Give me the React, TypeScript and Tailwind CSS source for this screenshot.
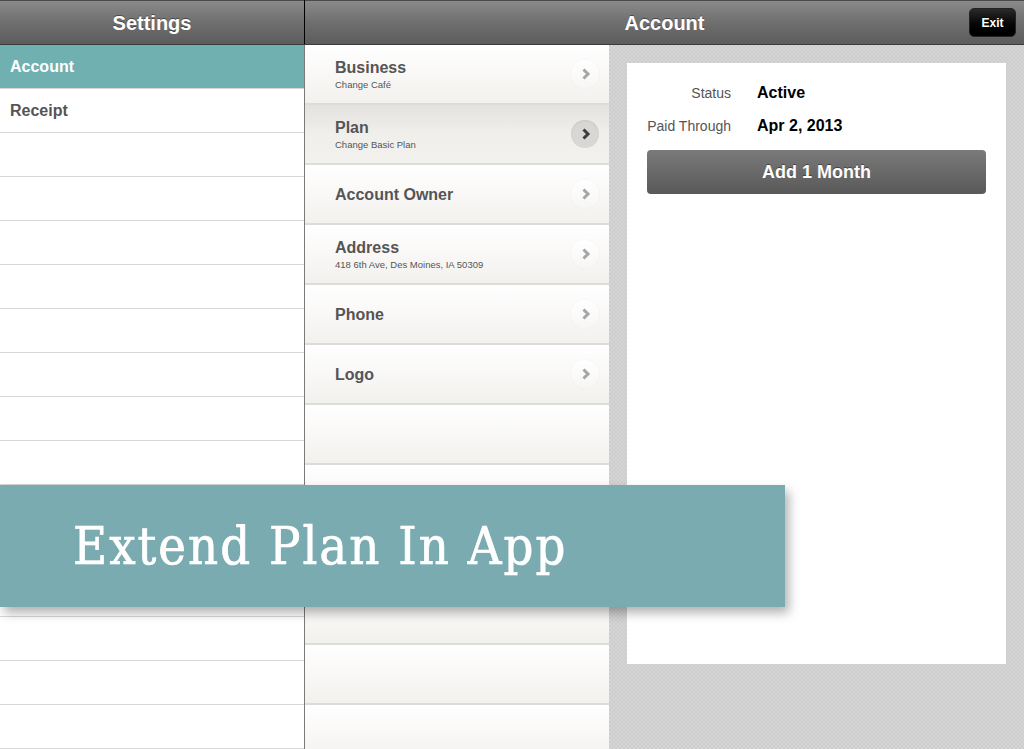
import React from "react";

const Chevron = ({ dark }: { dark?: boolean }) => (
  <div
    className={`flex h-[28px] w-[28px] items-center justify-center rounded-full ${
      dark
        ? "bg-[#d9d7d5] shadow-[inset_0_1px_2px_rgba(0,0,0,0.08)]"
        : "bg-gradient-to-b from-white to-[#f7f6f5] shadow-[0_0_2px_rgba(0,0,0,0.06)]"
    }`}
  >
    <svg width="12" height="14" viewBox="0 0 12 14" className="ml-[2px]">
      <path
        d="M3.5 2.5 L8 7 L3.5 11.5"
        fill="none"
        stroke={dark ? "#3d3d3d" : "#a6a6a6"}
        strokeWidth="3"
        strokeLinecap="butt"
        strokeLinejoin="miter"
      />
    </svg>
  </div>
);

const midRows: { title: string; sub?: string; active?: boolean }[] = [
  { title: "Business", sub: "Change Café" },
  { title: "Plan", sub: "Change Basic Plan", active: true },
  { title: "Account Owner" },
  { title: "Address", sub: "418 6th Ave, Des Moines, IA 50309" },
  { title: "Phone" },
  { title: "Logo" },
];

export default function App() {
  const leftRows = Array.from({ length: 17 });
  const emptyMid = Array.from({ length: 6 });
  return (
    <div
      className="relative h-[749px] w-[1024px] overflow-hidden bg-white"
      style={{ fontFamily: '"Liberation Sans", Arial, sans-serif' }}
    >
      {/* Header */}
      <div className="flex h-[45px] border-b border-[#3a3a3a] bg-gradient-to-b from-[#8c8c8c] via-[#6f6f6f] to-[#5c5c5c]">
        <div className="flex w-[304px] items-center justify-center border-t border-[#4a4a4a] text-[20px] font-bold text-white [text-shadow:0_-1px_0_rgba(0,0,0,0.4)]">
          Settings
        </div>
        <div className="w-px bg-black" />
        <div className="relative flex flex-1 items-center justify-center border-t border-[#4a4a4a] text-[20px] font-bold text-white [text-shadow:0_-1px_0_rgba(0,0,0,0.4)]">
          Account
          <div className="absolute right-[8px] top-[7px] flex h-[29px] w-[47px] items-center justify-center rounded-[5px] border border-[#222] bg-gradient-to-b from-[#2a2a2a] to-black text-[12px] font-bold text-white">
            Exit
          </div>
        </div>
      </div>

      {/* Body */}
      <div className="flex h-[704px]">
        {/* Left list */}
        <div className="w-[304px] bg-white">
          <div className="flex h-[44px] items-center border-b border-[#d8d8d8] bg-[#71b0b0] pl-[10px] text-[16px] font-bold text-white">
            Account
          </div>
          <div className="flex h-[44px] items-center border-b border-[#d8d8d8] pl-[10px] text-[16px] font-bold text-[#555]">
            Receipt
          </div>
          {leftRows.map((_, i) => (
            <div key={i} className="h-[44px] border-b border-[#d8d8d8]" />
          ))}
        </div>
        <div className="w-px bg-[#7a7a7a]" />

        {/* Middle list */}
        <div className="w-[304px] bg-[#f6f4f1]">
          {midRows.map((r) => (
            <div
              key={r.title}
              className={`flex h-[60px] items-center justify-between border-b-2 border-[#dedcda] pl-[30px] pr-[10px] ${
                r.active
                  ? "bg-gradient-to-b from-[#e4e2df] via-[#f1efec] to-[#f3f1ee]"
                  : "bg-gradient-to-b from-white to-[#f3f1ee]"
              }`}
            >
              <div className="flex flex-col pt-[1px]">
                <div className="text-[16px] font-bold leading-[20px] text-[#555]">{r.title}</div>
                {r.sub && <div className="text-[9.5px] leading-[13px] text-[#555]">{r.sub}</div>}
              </div>
              <Chevron dark={r.active} />
            </div>
          ))}
          {emptyMid.map((_, i) => (
            <div
              key={i}
              className="h-[60px] border-b-2 border-[#dedcda] bg-gradient-to-b from-white to-[#f3f1ee]"
            />
          ))}
        </div>

        {/* Right detail */}
        <div className="flex-1 bg-[repeating-conic-gradient(#d6d5d5_0_25%,#cecdcd_0_50%)] bg-[length:4px_4px] p-[18px]">
          <div className="h-[601px] bg-white px-[20px] pt-[18px]">
            <div className="grid grid-cols-[84px_1fr] items-center gap-x-[26px] gap-y-[9px]">
              <div className="text-right text-[14px] text-[#555]">Status</div>
              <div className="text-[16px] font-bold text-black">Active</div>
              <div className="whitespace-nowrap text-right text-[14px] text-[#555]">Paid Through</div>
              <div className="text-[16px] font-bold text-black">Apr 2, 2013</div>
            </div>
            <div className="mt-[12px] flex h-[44px] items-center justify-center rounded-[4px] bg-gradient-to-b from-[#7a7a7a] to-[#595959] text-[18px] font-bold text-white [text-shadow:0_-1px_0_rgba(0,0,0,0.4)]">
              Add 1 Month
            </div>
          </div>
        </div>
      </div>

      {/* Banner overlay */}
      <div className="absolute left-0 top-[485px] flex h-[122px] w-[785px] items-center bg-[#7aabb0] pl-[73px] shadow-[4px_6px_10px_rgba(0,0,0,0.3)]">
        <span
          className="text-[52px] font-normal tracking-[2px] text-white [-webkit-text-stroke:0.7px_white]"
          style={{ fontFamily: '"DejaVu Serif Condensed", "DejaVu Serif", serif' }}
        >
          Extend Plan In App
        </span>
      </div>
    </div>
  );
}
